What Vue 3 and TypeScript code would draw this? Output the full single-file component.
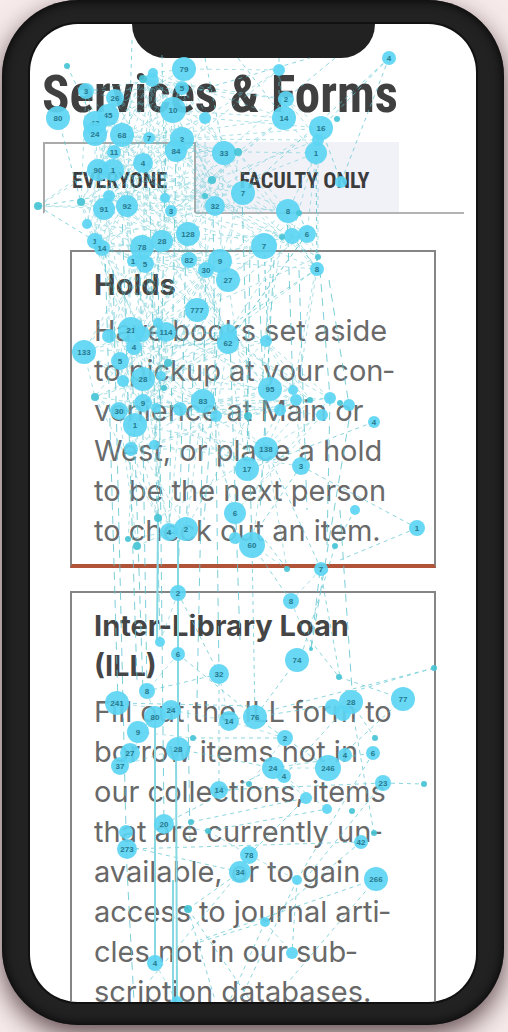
<script setup lang="ts">
import { ref } from 'vue'

type Node = [x: number, y: number, r: number, label?: string]
type Line = [x1: number, y1: number, x2: number, y2: number]

const tabs = ['EVERYONE', 'FACULTY ONLY']
const active = ref(0)

const cards = [
  {
    title: 'Holds',
    text: 'Have books set aside to pickup at your con\u00ADvenience at Main or West, or place a hold to be the next person to check out an item.',
    accent: true,
  },
  {
    title: 'Inter-Library Loan (ILL)',
    text: 'Fill out the ILL form to borrow items not in our collections, items that are currently un\u00ADavailable, or to gain access to journal arti\u00ADcles not in our sub\u00ADscription databases.',
    accent: false,
  },
]

const nodes: Node[] = [
  [67, 66, 3], [86, 91, 8, '3'], [58, 118, 12, '80'], [115, 98, 9, '26'], [108, 115, 11, '45'], [95, 123, 12, '43'],
  [152, 80, 7], [153, 73, 5], [143, 79, 4], [184, 69, 12, '79'], [182, 88, 7, '5'], [173, 110, 13, '10'], [205, 118, 6],
  [389, 58, 7, '4'], [279, 70, 6], [286, 99, 8, '2'], [284, 118, 12, '14'], [321, 128, 12, '16'], [337, 119, 3],
  [95, 134, 12, '24'], [122, 135, 12, '68'], [149, 138, 6, '7'], [182, 139, 12, '2'], [176, 151, 11, '84'],
  [224, 153, 12, '33'], [238, 152, 4], [114, 152, 7, '11'], [98, 170, 11, '90'], [113, 170, 11, '1'], [143, 163, 10, '4'],
  [212, 180, 4], [205, 196, 3], [243, 193, 12, '7'], [215, 206, 10, '32'], [165, 198, 5], [171, 211, 6, '3'],
  [109, 196, 6], [104, 209, 11, '91'], [127, 206, 11, '92'], [81, 202, 4], [38, 206, 4], [87, 224, 5],
  [95, 241, 8, '1'], [102, 248, 8, '14'], [142, 247, 12, '78'], [162, 241, 11, '28'], [188, 234, 12, '128'],
  [133, 261, 6, '1'], [145, 264, 9, '5'], [189, 260, 8, '82'], [206, 270, 8, '30'], [220, 261, 12, '9'], [228, 280, 12, '27'],
  [318, 140, 6], [316, 153, 11, '1'], [341, 182, 6], [288, 211, 12, '8'], [299, 213, 3], [292, 236, 8], [307, 234, 9, '6'],
  [282, 237, 3], [264, 246, 13, '7'], [318, 257, 3], [317, 269, 7, '8'],
  [197, 310, 12, '777'], [131, 330, 13, '21'], [142, 334, 8], [109, 336, 7], [134, 347, 8, '4'], [158, 323, 5],
  [166, 332, 10, '114'], [84, 352, 12, '133'], [228, 333, 9], [228, 343, 11, '62'], [120, 361, 9, '5'], [168, 363, 4],
  [123, 381, 6], [143, 379, 12, '28'], [161, 376, 5], [164, 388, 3], [95, 397, 4], [143, 403, 9, '9'], [119, 411, 9, '30'],
  [135, 425, 12, '1'], [156, 408, 5], [180, 409, 7], [203, 401, 12, '83'], [216, 416, 6], [131, 449, 7], [154, 445, 5],
  [248, 416, 4], [266, 341, 6], [270, 389, 12, '95'], [293, 390, 5], [296, 400, 6], [310, 400, 3], [330, 398, 6],
  [349, 405, 6], [340, 403, 3], [280, 410, 6], [322, 415, 6], [374, 422, 6, '4'], [266, 449, 12, '138'], [301, 466, 9, '3'],
  [247, 469, 12, '17'], [235, 513, 11, '6'], [355, 510, 5], [158, 518, 4], [169, 532, 9, '4'], [186, 529, 12, '2'],
  [235, 538, 6], [252, 545, 13, '60'], [417, 528, 8, '1'], [137, 546, 4], [128, 539, 3], [335, 546, 3], [287, 569, 3],
  [321, 569, 7, '7'], [178, 593, 8, '2'], [291, 601, 8, '8'], [160, 642, 5], [178, 654, 7, '6'], [219, 674, 10, '32'],
  [297, 660, 12, '74'], [311, 649, 2], [339, 677, 3], [147, 691, 8, '8'], [117, 703, 12, '241'], [155, 717, 11, '80'],
  [171, 710, 10, '24'], [138, 732, 11, '9'], [229, 721, 10, '14'], [255, 717, 12, '76'], [285, 738, 8, '2'],
  [333, 707, 8], [343, 713, 8], [351, 702, 12, '28'], [403, 699, 12, '77'], [434, 668, 3], [193, 738, 3], [375, 738, 3],
  [178, 749, 12, '28'], [130, 753, 10, '27'], [120, 766, 9, '37'], [273, 768, 11, '24'], [284, 776, 7, '4'],
  [328, 768, 13, '246'], [345, 755, 7, '4'], [373, 753, 7, '6'], [383, 783, 8, '23'], [424, 784, 3], [219, 790, 9, '14'],
  [249, 784, 3], [306, 798, 6], [327, 809, 5], [352, 811, 3], [164, 824, 10, '20'], [191, 822, 3], [208, 831, 3],
  [126, 832, 7], [127, 849, 10, '273'], [361, 842, 7, '42'], [374, 833, 3], [249, 855, 9, '78'], [240, 872, 11, '34'],
  [297, 880, 5], [376, 879, 12, '266'], [188, 909, 4], [265, 922, 5], [155, 963, 8, '4'], [292, 953, 6], [177, 1002, 6],
]

// Long saccades that run between the far parts of the page.
const longLines: Line[] = [
  [67, 66, 95, 123], [58, 118, 81, 202], [38, 206, 140, 190], [38, 206, 95, 241], [132, 40, 127, 206], [162, 55, 165, 198],
  [389, 58, 321, 128], [389, 58, 243, 193], [389, 58, 341, 182], [321, 128, 341, 182], [238, 58, 284, 118], [200, 90, 310, 58],
  [279, 58, 279, 118], [335, 58, 286, 99], [205, 58, 224, 153], [316, 153, 317, 269], [307, 234, 230, 340], [292, 236, 317, 269],
  [317, 269, 200, 345], [264, 246, 270, 389], [272, 250, 262, 389], [374, 422, 252, 468], [301, 466, 417, 528],
  [417, 528, 340, 560], [355, 510, 335, 546], [301, 466, 247, 545], [252, 545, 291, 601],
  [265, 540, 287, 569], [266, 449, 321, 569], [310, 640, 339, 677], [339, 677, 403, 699], [434, 668, 351, 692],
  [434, 668, 229, 721], [297, 660, 255, 717], [178, 654, 255, 717], [219, 674, 147, 691], [117, 703, 255, 706],
  [255, 717, 351, 702], [255, 717, 328, 768], [351, 702, 284, 776], [285, 738, 193, 738], [178, 749, 273, 768],
  [273, 768, 373, 753], [403, 699, 328, 768], [351, 702, 375, 738], [383, 783, 424, 784], [219, 790, 383, 783],
  [191, 822, 306, 798], [208, 831, 327, 809], [164, 824, 273, 768], [127, 849, 361, 842], [373, 753, 297, 880],
  [383, 783, 306, 878], [361, 842, 265, 922], [240, 872, 130, 847], [249, 855, 306, 798], [188, 909, 240, 872],
  [265, 922, 200, 942], [376, 879, 200, 940], [376, 879, 290, 980], [297, 880, 292, 953], [240, 872, 150, 980],
  [188, 909, 215, 1000], [265, 922, 230, 1000], [188, 909, 250, 1000], [297, 880, 240, 1000], [374, 833, 351, 702],
  [320, 569, 340, 677], [335, 546, 300, 660], [178, 593, 219, 674], [252, 545, 255, 717], [219, 674, 219, 790],
]

const verticals: Line[] = [
  [105, 250, 118, 703], [113, 270, 126, 832], [122, 210, 137, 680], [131, 330, 143, 691], [140, 250, 147, 691],
  [149, 160, 160, 642], [158, 250, 164, 824], [166, 130, 158, 518], [176, 150, 169, 532], [186, 240, 178, 593],
  [196, 310, 186, 529], [206, 270, 197, 700], [213, 206, 219, 674], [222, 280, 204, 520], [230, 340, 240, 640],
  [242, 193, 252, 545], [250, 246, 247, 469], [258, 260, 266, 449], [274, 260, 260, 510], [287, 211, 293, 390],
  [299, 270, 307, 510], [320, 270, 330, 398], [329, 280, 349, 405], [330, 398, 327, 545], [349, 420, 311, 649],
  [340, 510, 352, 690], [320, 570, 311, 649], [126, 850, 134, 1002], [188, 710, 190, 840],
]
const trunks: Line[] = [
  [158, 518, 157, 640], [155, 717, 155, 963], [178, 540, 178, 749], [176, 750, 177, 1002], [173, 880, 173, 1002],
]

// Neighbouring fixations, in the dense part above and the sparser one below.
const nearby: Line[] = []
nodes.forEach(([x1, y1], i) => {
  for (const step of [2, 5, 9, 14, 19, 23, 27, 31, 38]) {
    const next = nodes[i + step]
    if (!next) continue
    const [x2, y2] = next
    const reach = y1 < 460 ? 150 : 62
    if (Math.hypot(x2 - x1, y2 - y1) < reach && x1 < 335 && x2 < 335 && x1 > 80) nearby.push([x1, y1, x2, y2])
  }
})
</script>

<template>
  <main class="stage">
    <div class="phone">
      <div class="screen">
        <div class="notch"></div>
        <h1>Services &amp; Forms</h1>
        <nav class="tabs" aria-label="Audience">
          <button
            v-for="(tab, i) in tabs"
            :key="tab"
            type="button"
            class="tab"
            :class="{ active: active === i }"
            :aria-pressed="active === i"
            @click="active = i"
          >{{ tab }}</button>
        </nav>
        <div class="cards">
          <article v-for="card in cards" :key="card.title" class="card" :class="{ accent: card.accent }">
            <h2>{{ card.title }}</h2>
            <p>{{ card.text }}</p>
          </article>
        </div>
        <svg class="gaze" viewBox="30 24 446 978" preserveAspectRatio="xMidYMin meet" aria-hidden="true">
          <g class="nearby">
            <line v-for="(l, i) in nearby" :key="i" :x1="l[0]" :y1="l[1]" :x2="l[2]" :y2="l[3]" />
          </g>
          <g class="verticals">
            <line v-for="(l, i) in verticals" :key="i" :x1="l[0]" :y1="l[1]" :x2="l[2]" :y2="l[3]" />
          </g>
          <g class="long">
            <line v-for="(l, i) in longLines" :key="i" :x1="l[0]" :y1="l[1]" :x2="l[2]" :y2="l[3]" />
          </g>
          <g class="trunks">
            <line v-for="(l, i) in trunks" :key="i" :x1="l[0]" :y1="l[1]" :x2="l[2]" :y2="l[3]" />
          </g>
          <g v-for="(n, i) in nodes" :key="i">
            <circle :cx="n[0]" :cy="n[1]" :r="n[2]" :class="{ small: n[2] < 5 }" />
            <text v-if="n[3]" :x="n[0]" :y="n[1] + 3">{{ n[3] }}</text>
          </g>
        </svg>
      </div>
    </div>
  </main>
</template>

<style>
html,
body {
  background: #f6eaea;
}
</style>

<style scoped>
.stage {
  box-sizing: border-box;
  height: 100vh;
  padding: 0 4px 7px 2px;
  overflow: hidden;
  background: #f6eaea;
}
.phone {
  box-sizing: border-box;
  height: 100%;
  padding: 24px 28px 23px;
  border-radius: 76px;
  background: #222;
  box-shadow: inset 0 0 12px #000, 0 10px 26px rgba(50, 25, 30, 0.75);
}
.screen {
  position: relative;
  height: 100%;
  overflow: hidden;
  border-radius: 48px;
  background: #fff;
  box-shadow: 0 0 0 2px #111;
  font-family: Inter, "Liberation Sans", sans-serif;
}
.notch {
  width: 243px;
  height: 34px;
  margin: 0 auto;
  border-radius: 0 0 34px 34px;
  background: #222;
}
h1 {
  margin: 8px 0 0 12px;
  color: #424142;
  font: bold 51px/58px "Roboto Condensed", Roboto, sans-serif;
  white-space: nowrap;
}
.tabs {
  display: flex;
  margin: 18px 12px 0 13px;
  border-bottom: 2px solid #b4b4b6;
}
.tab {
  box-sizing: border-box;
  width: 203px;
  height: 70px;
  padding: 8px 0 0 14px;
  border: 0;
  background: #f0f2f8;
  color: #3d3d3f;
  font: bold 22px/24px "Roboto Condensed", Roboto, sans-serif;
  white-space: nowrap;
}
.tab.active {
  width: 153px;
  height: 72px;
  margin-bottom: -2px;
  padding: 6px 0 0;
  border: 2px solid #aaa;
  border-bottom-color: #fff;
  background: #fff;
}
.cards {
  display: grid;
  gap: 23px;
  margin: 36px 40px 0;
}
.card {
  padding: 13px 26px 13px 22px;
  border: 2px solid #858585;
}
.card.accent {
  border-bottom: 4px solid #b15339;
}
h2 {
  margin: 0;
  color: #454545;
  font-size: 29px;
  font-weight: 700;
  line-height: 40px;
}
p {
  margin: 6px 0 0;
  color: #6a6a6a;
  font-size: 29px;
  line-height: 40px;
  hyphens: manual;
}
.gaze {
  position: absolute;
  top: 0;
  left: 0;
  width: 100%;
  pointer-events: none;
}
.gaze line {
  stroke: #5cc5d0;
  stroke-width: 1;
  stroke-dasharray: 4 4;
}
.gaze .nearby {
  opacity: 0.5;
}
.gaze .verticals {
  opacity: 0.8;
}
.gaze .verticals line {
  stroke-dasharray: 8 6;
}
.gaze .long {
  opacity: 0.7;
}
.gaze .trunks line {
  stroke: #86d8e2;
  stroke-width: 2;
  stroke-dasharray: none;
}
.gaze circle {
  fill: #5cd5f3;
  fill-opacity: 0.92;
}
.gaze circle.small {
  fill: #48c4d6;
}
.gaze text {
  fill: #27788e;
  font: bold 8px "Liberation Sans", sans-serif;
  text-anchor: middle;
}
</style>
